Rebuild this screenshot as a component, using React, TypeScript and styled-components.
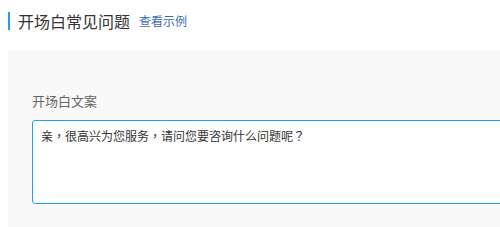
import styled, { createGlobalStyle } from 'styled-components';

const GlobalStyle = createGlobalStyle`
  html, body {
    margin: 0;
    padding: 0;
    background: #fff;
    font-family: "Noto Sans CJK SC", "Noto Sans", sans-serif;
    overflow: hidden;
  }
`;

const Page = styled.div`
  padding: 12px 0 0 8px;
  width: 600px;
`;

const Header = styled.div`
  display: flex;
  align-items: center;
  height: 18px;
  border-left: 2px solid #1e9ff2;
  padding-left: 8px;
`;

const Title = styled.h2`
  margin: 0;
  font-size: 16px;
  font-weight: 400;
  color: #333;
  line-height: 18px;
`;

const Link = styled.a`
  margin-left: 9px;
  font-size: 12px;
  color: #3d6db4;
  text-decoration: none;
  line-height: 18px;
  cursor: pointer;
`;

const Panel = styled.div`
  margin-top: 20px;
  background: #f9f9f9;
  padding: 42px 24px 30px;
`;

const Label = styled.div`
  font-size: 13px;
  color: #666;
  line-height: 18px;
  margin-bottom: 10px;
`;

const TextArea = styled.textarea`
  display: block;
  box-sizing: border-box;
  width: 560px;
  height: 84px;
  padding: 6px 8px;
  border: 1px solid #1e9ff2;
  border-radius: 3px;
  background: #fff;
  font-family: "Noto Sans CJK TC", "Noto Sans CJK SC", sans-serif;
  font-size: 12px;
  line-height: 18px;
  color: #333;
  resize: none;
  outline: none;
`;

const App = () => {
  return (
    <Page>
      <GlobalStyle />
      <Header>
        <Title>开场白常见问题</Title>
        <Link>查看示例</Link>
      </Header>
      <Panel>
        <Label>开场白文案</Label>
        <TextArea defaultValue="亲，很高兴为您服务，请问您要咨询什么问题呢？" />
      </Panel>
    </Page>
  );
};

export default App;
